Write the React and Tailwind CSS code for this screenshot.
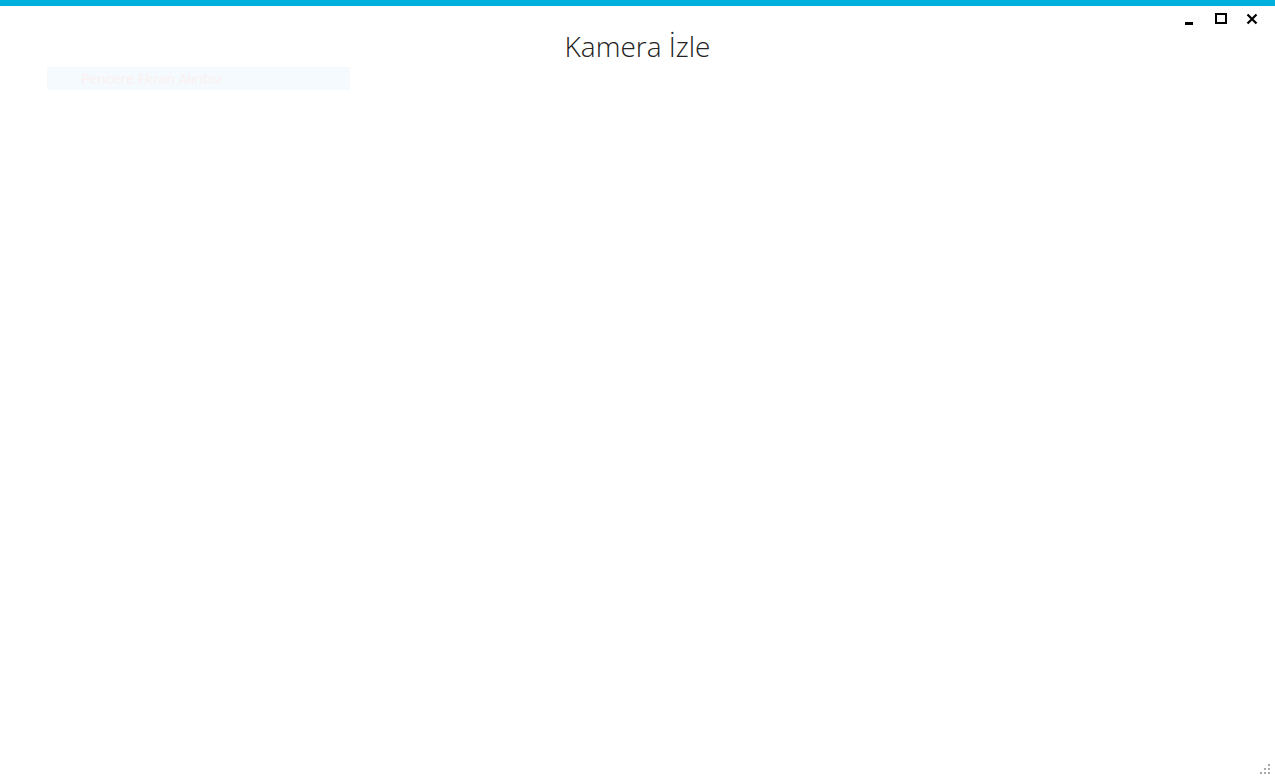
import React from "react";

const App = () => {
  return (
    <div className="relative h-screen w-full bg-white flex flex-col overflow-hidden" style={{ fontFamily: '"Open Sans", "Noto Sans", sans-serif' }}>
      <div className="h-[6px] bg-[#00b0dc] shrink-0" />

      {/* window controls */}
      <div className="absolute top-[12px] right-[17px] flex items-center gap-[19px] text-black">
        <svg width="12" height="14" viewBox="0 0 12 14">
          <rect x="1" y="10" width="8" height="3" fill="#000" />
        </svg>
        <svg width="12" height="12" viewBox="0 0 12 12">
          <rect x="1" y="1" width="10" height="9" fill="none" stroke="#000" strokeWidth="2" />
        </svg>
        <svg width="12" height="12" viewBox="0 0 12 12">
          <path d="M1.5 1.5 L10.5 10.5 M10.5 1.5 L1.5 10.5" stroke="#000" strokeWidth="2.2" />
        </svg>
      </div>

      <h1 className="text-center text-[28px] leading-none font-light text-[#222] mt-[26px]">Kamera İzle</h1>

      <button className="mt-[7px] ml-[47px] w-[303px] h-[23px] bg-[#f4fafd] text-left pl-[34px] text-[14px] text-[#fcf0f0]">
        Pencere Ekran Alıntısı
      </button>

      <div className="flex-1" />

      <div className="absolute bottom-[6px] right-[5px] grid grid-cols-3 gap-[2px]">
        <span className="w-[2px] h-[2px]" />
        <span className="w-[2px] h-[2px]" />
        <span className="w-[2px] h-[2px] bg-[#aaa]" />
        <span className="w-[2px] h-[2px]" />
        <span className="w-[2px] h-[2px] bg-[#aaa]" />
        <span className="w-[2px] h-[2px] bg-[#aaa]" />
        <span className="w-[2px] h-[2px] bg-[#aaa]" />
        <span className="w-[2px] h-[2px] bg-[#aaa]" />
        <span className="w-[2px] h-[2px] bg-[#aaa]" />
      </div>
    </div>
  );
};

export default App;
